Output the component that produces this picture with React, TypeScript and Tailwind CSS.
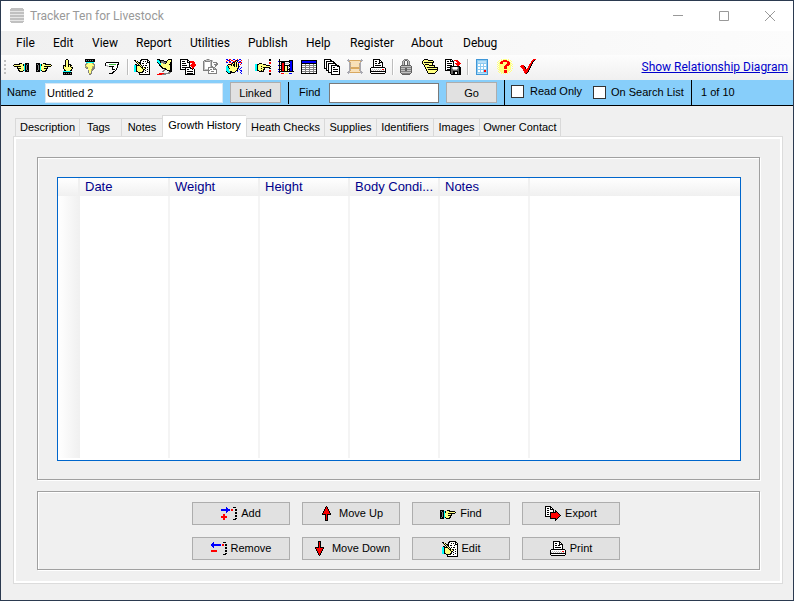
import React from "react";

const palette: Record<string, string> = {
  k: "#000000", y: "#ffff80", Y: "#b8b060", g: "#808080", s: "#c0c0c0", w: "#ffffff",
  r: "#ff0000", b: "#0000ff", c: "#00ffff", n: "#0000a0", o: "#d8a860", p: "#f8e0b8",
  G: "#40c040", u: "#3f97d8", v: "#b8e0f8", d: "#606060", l: "#ffff80", e: "#e6e6e6",
  t: "#8ccaf0", m: "#a8a8b0",
};

const handRight = [
  "kkkk...kkk......",
  "kgkkckyyykkkkkk.",
  "kkgkckyyyyyyyyyk",
  "kkgkcyyykkkkkkk.",
  "kkgkcyyyyyyk....",
  "kkgkcyyykkkk....",
  "kkgkcyyyyyk.....",
  "kgkkckyyykk.....",
  "kkkk..kkkk......",
];

const icons: Record<string, string[]> = {
  handRight: ["", "", "", "", ...handRight],
  handLeft: ["", "", "", "", ...handRight.map((r) => r.split("").reverse().join(""))],
  handUp: [
    ".......kk.......",
    "......kyyk......",
    "......kyyk......",
    "......kyyk......",
    "......kyyk......",
    "......kyykkk....",
    "....kkkyykykk...",
    "....kykyykyky...",
    "....kyyyyyyykk..",
    "....kyyyyyyyyk..",
    ".....kyyyyyyk...",
    ".....kkyyyykk...",
    "....cccccccc....",
    "....kkkkkkkkk...",
    "....kgkgkgkgk...",
    "....kkkkkkkkk...",
  ],
  handDown: [
    "...kkkkkkkkkk...",
    "...kgkgkgkgkk...",
    "...kkkkkkkkkk...",
    "....cccccccc....",
    "....gYyyyyYg....",
    "...gYyyyyyyYg...",
    "...gyyyyyyyyg...",
    "...YYyyyyyYYg...",
    "...gYgyyyyYgg...",
    "....ggyyyyggg...",
    "......yyyYgg....",
    "......gyyYg.....",
    "......gyyg......",
    "......gyyg......",
    ".......YYg......",
    ".......gg.......",
  ],
  sign: [
    "", "", "",
    ".kkkkkkkkkkkkk..",
    "kwwwwwwwwwwwwk..",
    "kwwwGGGGGGGwkk..",
    "ksswwwwwwwwwk...",
    "..sskkkkkwwwk...",
    ".......kwwwwk...",
    ".......kwwwk....",
    ".......kkkwk....",
    ".........wk.....",
    "........kk......",
    ".......kk.......",
    "....kkkk........",
  ],
  edit: [
    ".......kkkkkkk..",
    "kk....kkwwwwwkk.",
    ".kyk..kwwkwkwkwk",
    "..kykkkwwwwwwkkk",
    "...kykkwkkwwkwwk",
    ".kk.kykwwwwwwwwk",
    "cckkkkykwkwkkwwk",
    "cckyyykykwwwwwwk",
    "cckyyyykkykkwkwk",
    "cckyyyyykyykwwwk",
    "cckyyyyyykkwwkwk",
    "cckyyyyyykwkwwwk",
    "cckkyyyykkwwwkwk",
    "....kkkkkwwkwwwk",
    ".....kwwwwwwwwwk",
    ".....kkkkkkkkkkk",
  ],
  erase: [
    "kkk........kkkk.",
    "cckkkkk...kyyyk.",
    "ccckgggkkkyyyyk.",
    "kcckgggggkyyykk.",
    ".kccyyggkyyyykk.",
    "..kcyyyyyyyykkk.",
    "..kkyyyyyyyyykk.",
    "...kkyyyyyyyykk.",
    "....kkyyyyyyykk.",
    ".....kkkkyyyykk.",
    ".......gkkyyykk.",
    "......gg..kkkkk.",
    ".....gg.....kkk.",
    "...........ggg..",
    "..rrrrrgggggg...",
    "rrrrrgggg.......",
  ],
  copyDown: [
    "kkkkkkkk........",
    "kwwwwwwkk.......",
    "kwkkkwwkwkrrrr..",
    "kwwwwwwkkkrrrrr.",
    "kwkkkkwwwk..rrr.",
    "kwwwwwwwwk.rrrrr",
    "kwkkkkkwwkrrrrrr",
    "kwwwwwwwwk.rrrr.",
    "kwkkkkkkkkk.rr..",
    "kwwwwkwwwwkkrk..",
    "kkkkkkwkkwwwkwk.",
    ".....kwwwwwwwwk.",
    ".....kwkkkkkkwk.",
    ".....kwwwwwwwwk.",
    ".....kwkkkkkkwk.",
    ".....kkkkkkkkkk.",
  ],
  paste: [
    "...sggs.........",
    ".ggssssggs......",
    "gsgggggsgs......",
    "gswwwwwsg.gggg..",
    "gswwwwwsg....gg.",
    "gswwwwwsg..gggg.",
    "gswwwwwsg...gg..",
    "gswwwwwsgg..g...",
    "gswwwggggggg....",
    "gswwwgwwwwgsg...",
    "gssssgwggwgggg..",
    "gggggggwwwwwwg..",
    ".....gwwgggwwg..",
    ".....gwwwwwwwg..",
    ".....ggggggggg..",
  ],
  handColor: [
    "bb.rr..bb..r.bb.",
    ".rbb.rr..rkbb..r",
    "r..rb..rrkyk.rb.",
    "bb.rr.bkkyk.bbrr",
    ".....rkykyk.r..b",
    "..kkkkykkykyk.r.",
    ".kyyykykkykyk...",
    "cckyyyyykykykb..",
    "cckyyyyyyyyyk..b",
    "ccckyyyyyyykb.b.",
    "cccyyyyyyyyk.b..",
    "cccyyyyyyykk..bb",
    "kccckkyyyk.b...b",
    ".kcckkkkk.....b.",
    "..kkk..........b",
  ],
  handRed: [
    "..............kk",
    "..............kk",
    "................",
    "..............rr",
    "....kkk.......rr",
    "cckkyyyykkk.....",
    "cckyyyyyyyykkkk.",
    "cckyyykyyyyyyyyk",
    "cckyyyyykkkkkkk.",
    "cckyyykyyk....kk",
    "cckyyyyykk......",
    "cckkyykyk.....rr",
    "....kkkkk.....rr",
    "................",
    "..............kk",
    "..............kk",
  ],
  chart: [
    ".k..............",
    ".k.........kkkk.",
    "bkkkkkkkkkkkbbk.",
    ".k.kkkk....kbbk.",
    ".kskrrkssssKbbk.",
    ".k.krrk....kbbk.",
    "bkkkrrkkkkkkbbk.",
    ".k.krrkyyk.kbbk.",
    ".kskrrkyyksKbbk.",
    ".k.krrkyyk.kbbk.",
    "bkkkrrkyykkkbbk.",
    ".k.krrkyyk.kbbk.",
    "bkkkkkkkkkkkkkkk",
    ".k..............",
    "...rrr.yyy.bbb..",
  ],
  grid: [
    "",
    "kkkkkkkkkkkkkkkk",
    "kbbbbbbbbbbbbbbk",
    "kbbbbbbbbbbbbbbk",
    "kkkkkkkkkkkkkkkk",
    "kwwwgwwwgwwwgwwk",
    "kgggggggggggggGk",
    "kwwwgwwwgwwwgwwk",
    "kggggggggggggggk",
    "kwwwgwwwgwwwgwwk",
    "kggggggggggggggk",
    "kwwwgwwwgwwwgwwk",
    "kggggggggggggggk",
    "kwwwgwwwgwwwgwwk",
    "kkkkkkkkkkkkkkkk",
  ],
  pages: [
    "kkkkkkk.........",
    "kwwwwwkk........",
    "kwkkkkkkkk......",
    "kwkwwwwwwkk.....",
    "kwkwkkkkkkkk....",
    "kwkwkwwwwwwkk...",
    "kwkwkwwkkkkkkkk.",
    "kwkwkwwkwwwwwkkk",
    "kwkwkwwkwkkwwwwk",
    "kkkwkwwkwwwwwwwk",
    "..kwkwwkwkkkkkwk",
    "..kkkwwkwwwwwwwk",
    "....kwwkwkkkkkwk",
    "....kkkkwwwwwwwk",
    ".......kwwwwwwwk",
    ".......kkkkkkkkk",
  ],
  film: [
    ".m............m.",
    "mmmoooooooooommm",
    ".moppppppppppom.",
    "..mopppppppppm..",
    "..mmppppppppmm..",
    "..moppppppppom..",
    "..mmppppppppmm..",
    "..moppppppppom..",
    "..mmoooooooomm..",
    "..moooooooooom..",
    "..mmppppppppmm..",
    "..moppppppppom..",
    ".mmppppppppppmm.",
    "mmmoooooooooommm",
    ".m............m.",
  ],
  print: [
    "...kkkkkkk......",
    "...kwwwwwkk.....",
    "...kwkkwwkwk....",
    "...kwwwwwkkkk...",
    "...kwkkwkkwwk...",
    "...kwwwwwwwwk...",
    "...kwkkkkkkwk...",
    "...kwwwwwwwwk...",
    ".kkkkkkkkkkkkkk.",
    "kwwwwwwwwwwwwwwk",
    "kwswswswswswrrwk",
    "kswswswswswswswk",
    "kkkkkkkkkkkkkkkk",
    "kwwwwwwwwwwwwwwk",
    ".kkkkkkkkkkkkkk.",
  ],
  lock: [
    ".....gggg.......",
    "....gsddsg......",
    "...gsd..dsg.....",
    "...gsd..dsg.....",
    "...gsd..dsg.....",
    "...gsd..dsg.....",
    "..dddddddddd....",
    ".dssssssssssd...",
    ".dggggggggggd...",
    ".dssssddssssd...",
    ".dggggddggggd...",
    ".dssssddssssd...",
    ".dggggggggggd...",
    ".dssssssssssd...",
    "..dggggggggd....",
    "...dddddddd.....",
  ],
  folders: [
    "..kkkk..........",
    ".kyyyykkkkk.....",
    "kyyyyyyyyyyk....",
    "kykkkkkkkkkk....",
    "kyyyyyyyyyk.....",
    ".kykkkkyyyk.....",
    "..kyyyykkkkkk...",
    "..kyyyyyyyyyk...",
    "...kykkkkkkkkkkk",
    "...kyyyyyyyyyyyk",
    "....kykkkkkkkkkk",
    "....kyyyyyyyyyyk",
    ".....kyyyyyyyyk.",
    ".....kyyyyyyyk..",
    "......kkkkkkk...",
  ],
  save: [
    "kkkkkkk.........",
    "kwwwwkwk.rrrr...",
    "kwkkwkkkk..rrr..",
    "kwwwwwwwk...rrr.",
    "kwkkkkkwk.rrrrrr",
    "kwwwwwwwk..rrrr.",
    "kwkkkkkwk...rr..",
    "kwwwwkkkkkkkkkk.",
    "kwkkkkdswwwwsdkk",
    "kwwwwkdswwwwsdkk",
    "kwkkkkddssssddkk",
    "kkkkkkddddddddkk",
    ".....kddkkkkkdkk",
    ".....kddkkwwkdkk",
    ".....kddkkwwkdkk",
    "......kkkkkkkkkk",
  ],
  calc: [
    "..uuuuuuuuuuuu..",
    "..uttttttttttu..",
    "..utvvvvvvvvtu..",
    "..utvvvvvvvvtu..",
    "..uttttttttttu..",
    "..utwwtwwtwwtu..",
    "..utwwtwwtwwtu..",
    "..uttttttttttu..",
    "..utwwtwwtwwtu..",
    "..utwwtwwtwwtu..",
    "..uttttttttttu..",
    "..utwwtwwtrrtu..",
    "..utwwtwwtrrtu..",
    "..uttttttttttu..",
    "..uvvvvvvvvvvu..",
    "..uuuuuuuuuuuu..",
  ],
  help: [
    "....l.llll.l....",
    "..l.llrrrrll.l..",
    ".l.lrrrrrrrrl.l.",
    "l.lrrrllllrrrl..",
    ".llrrrllllrrrll.",
    "l.lllllllrrrrl.l",
    ".lllllllrrrrlll.",
    "l.lllllrrrllll.l",
    ".llllllrrrllll..",
    "l.lllllrrrllll.l",
    ".lllllllllllll..",
    "..lllllrrrlll.l.",
    ".l.llllrrrll.l..",
    "..l.lllrrrl.l...",
    "....l.l.l.l.....",
  ],
  check: [
    ".............rrr",
    "............rrk.",
    "...........rrk..",
    "...........rk...",
    "..........rrk...",
    ".........rrk....",
    ".rrr.....rrk....",
    "rrrrk...rrk.....",
    ".rrrrk..rrk.....",
    "..rrrk.rrk......",
    "...rrrrrrk......",
    "...rrrrrk.......",
    "....rrrrk.......",
    "....rrrk........",
    ".....rk.........",
  ],
  add: [
    "",
    ".....b......kkk.",
    ".....bb.........",
    "bbbbbbbbb.rr..kk",
    "bbbbbbbbb.rr..kk",
    ".....bb.........",
    ".....b........kk",
    "..............kk",
    "..rr............",
    "..rr..........kk",
    "rrrrrr........kk",
    "rrrrrr..........",
    "..rr..........kk",
    "..rr........kkk.",
  ],
  remove: [
    "",
    "..b.........kkk.",
    ".bb.............",
    "bbbbbbbbbb.rr.kk",
    "bbbbbbbbbb.rr.kk",
    ".bb.............",
    "..b...........kk",
    "..............kk",
    "................",
    "rrrrrr........kk",
    "rrrrrr........kk",
    "................",
    "..............kk",
    "............kkk.",
  ],
  up: [
    ".......k........",
    "......krk.......",
    "......krk.......",
    ".....krrrk......",
    ".....krrrk......",
    "....krrrrrk.....",
    "....krrrrrk.....",
    "...krrrrrrrk....",
    "...kkkkrkkkk....",
    "......krk.......",
    "......krk.......",
    "......krk.......",
    "......krk.......",
    "......krk.......",
    "......kkk.......",
  ],
  exportDoc: [
    "kkkkkk..........",
    "kwwwwkk.........",
    "kwkkwkwk........",
    "kwwwwkkkk.......",
    "kwkkwwwwk.k.....",
    "kwwwwwwwk.kk....",
    "kwkkwkkkkkkrk...",
    "kwwwwkrrrrrrrk..",
    "kwkkwkrrrrrrrrk.",
    "kwwwwkrrrrrrrrrk",
    "kkkkkkrrrrrrrrk.",
    ".....krrrrrrrk..",
    ".....kkkkkkrk...",
    "..........kk....",
    "..........k.....",
  ],
  app: [
    ".ssssssssssss...",
    "ssssssssssssss..",
    "ssssssssssssss..",
    "eeeeeeeeeeeeee..",
    "ssssssssssssss..",
    "ssssssssssssss..",
    "eeeeeeeeeeeeee..",
    "ssssssssssssss..",
    "ssssssssssssss..",
    "eeeeeeeeeeeeee..",
    "ssssssssssssss..",
    "ssssssssssssss..",
    "eeeeeeeeeeeeee..",
    "ssssssssssssss..",
    ".ssssssssssss...",
  ],
};
icons.down = [...icons.up].reverse();

function PixelIcon({ name }: { name: string }) {
  return (
    <svg className="size-4 shrink-0" viewBox="0 0 16 16" shapeRendering="crispEdges" aria-hidden="true">
      {icons[name].flatMap((row, y) =>
        row.split("").map((ch, x) =>
          palette[ch] ? <rect key={`${x}-${y}`} x={x} y={y} width="1" height="1" fill={palette[ch]} /> : null
        )
      )}
    </svg>
  );
}

const menus = [
  ["File", "w-[37px]"], ["Edit", "w-[39px]"], ["View", "w-11"], ["Report", "w-[54px]"],
  ["Utilities", "w-[58px]"], ["Publish", "w-[58px]"], ["Help", "w-11"], ["Register", "w-[61px]"],
  ["About", "w-[52px]"], ["Debug", "w-[54px]"],
];

const toolGroups = [
  ["handLeft", "handRight", "handUp", "handDown", "sign"],
  ["edit", "erase", "copyDown", "paste", "handColor"],
  ["handRed", "chart", "grid", "pages", "film", "print"],
  ["lock", "folders", "save"],
  ["calc", "help", "check"],
];
const toolLabels: Record<string, string> = {
  handLeft: "Previous", handRight: "Next", handUp: "First", handDown: "Last", sign: "Go to",
  edit: "Edit", erase: "Clear", copyDown: "Copy", paste: "Paste", handColor: "Select",
  handRed: "Find", chart: "Chart", grid: "Table", pages: "Pages", film: "Images", print: "Print",
  lock: "Lock", folders: "Open", save: "Save", calc: "Calculator", help: "Help", check: "Check",
};

const tabs = [
  ["Description", "w-16"], ["Tags", "w-[42px] pr-1"], ["Notes", "w-[41px]"], ["Growth History", "w-[84px]"],
  ["Heath Checks", "w-[78px]"], ["Supplies", "w-[52px]"], ["Identifiers", "w-[57px]"],
  ["Images", "w-[46px]"], ["Owner Contact", "w-[82px]"],
];

const actions = [
  ["Add", "add"], ["Move Up", "up"], ["Find", "handRight"], ["Export", "exportDoc"],
  ["Remove", "remove"], ["Move Down", "down"], ["Edit", "edit"], ["Print", "print"],
];

const columns = ["Date", "Weight", "Height", "Body Condi...", "Notes"];

function Etched({ className, children }: { className: string; children: React.ReactNode }) {
  return (
    <div className={`border border-[#a0a0a0] shadow-[inset_1px_1px_0_#fff,1px_1px_0_#fff] ${className}`}>{children}</div>
  );
}

export default function App() {
  return (
    <div className="flex min-h-screen flex-col border border-[#2b3a50] bg-[#f0f0f0] font-['Liberation_Sans',Arial,sans-serif] text-[11px] leading-[13px] text-black">
      <header className="flex h-[30px] items-center bg-white pl-[9px] font-[Roboto,sans-serif] text-xs text-[#999]">
        <PixelIcon name="app" />
        <h1 className="ml-1 flex-1">Tracker Ten for Livestock</h1>
        <button aria-label="Minimize" className="flex h-full w-[46px] items-center justify-center">
          <svg className="size-[11px]" viewBox="0 0 11 11" stroke="#999" fill="none"><path d="M0 4.5h10" /></svg>
        </button>
        <button aria-label="Maximize" className="flex h-full w-[46px] items-center justify-center">
          <svg className="size-[11px]" viewBox="0 0 11 11" stroke="#999" fill="none"><path d="M.5.5h9v9h-9z" /></svg>
        </button>
        <button aria-label="Close" className="flex h-full w-[46px] items-center justify-center">
          <svg className="size-[11px]" viewBox="0 0 11 11" stroke="#999" fill="none"><path d="M0 0l10 10M10 0l-10 10" /></svg>
        </button>
      </header>

      <nav className="flex h-6 items-center bg-linear-to-r from-[#f0f0f0] to-[#fcfcfc] pl-[7px] font-[Roboto,sans-serif] text-xs">
        {menus.map(([label, width]) => (
          <button key={label} className={`h-full pl-2 text-left whitespace-nowrap ${width}`}>{label}</button>
        ))}
      </nav>

      <div className="flex h-[25px] items-center bg-linear-to-b from-[#fdfdfd] to-[#f0f0f0] pr-[5px] pb-[2px] pl-[3px]">
        <div className="flex w-[5px] flex-col gap-[2px]">
          {[0, 1, 2, 3].map((i) => <span key={i} className="size-[2px] bg-[#c0c0c0]" />)}
        </div>
        {toolGroups.map((group, index) => (
          <div key={index} className="flex items-center">
            {index > 0 && <span className="mr-px ml-[3px] h-4 w-[2px] border-l border-[#bdbdbd] bg-white" />}
            {group.map((icon) => (
              <button key={icon} aria-label={toolLabels[icon]} className="flex h-[22px] w-[23px] items-center pl-1">
                <PixelIcon name={icon} />
              </button>
            ))}
          </div>
        ))}
        <a href="#diagram" className="ml-auto font-[Roboto,sans-serif] text-xs whitespace-nowrap text-[#0000cc] underline">
          Show Relationship Diagram
        </a>
      </div>

      <div className="flex h-[26px] items-center border-b border-black bg-[#87cefa] pl-[6px]">
        <label htmlFor="name" className="w-[38px]">Name</label>
        <input id="name" defaultValue="Untitled 2" className="h-5 w-[178px] border border-[#d8e8f4] bg-white px-px outline-none" />
        <button className="ml-[7px] h-[21px] w-[51px] border border-[#adadad] bg-[#e1e1e1] pt-px">Linked</button>
        <span className="ml-[7px] h-[22px] w-px bg-black" />
        <label htmlFor="find" className="ml-[10px] w-[30px]">Find</label>
        <input id="find" className="h-5 w-[110px] border border-[#7a7a7a] bg-white px-1 outline-none" />
        <button className="ml-[7px] h-[21px] w-[51px] border border-[#adadad] bg-[#e1e1e1] pt-px">Go</button>
        <span className="ml-[7px] h-full w-px bg-black" />
        <label className="ml-[6px] flex w-[82px] items-center gap-[6px] pb-[2px] whitespace-nowrap">
          <input type="checkbox" className="size-[13px] shrink-0 appearance-none border border-[#333] bg-white" />
          Read Only
        </label>
        <label className="flex w-[98px] items-center gap-[5px] whitespace-nowrap">
          <input type="checkbox" className="size-[13px] shrink-0 appearance-none border border-[#333] bg-white" />
          On Search List
        </label>
        <span className="h-full w-px bg-black" />
        <span className="ml-[9px]">1 of 10</span>
      </div>

      <main className="flex flex-1 flex-col pt-[9px] pr-[10px] pb-4 pl-3">
        <div role="tablist" className="flex items-end pl-[2px]">
          {tabs.map(([label, width]) => {
            const selected = label === "Growth History";
            return (
              <button
                key={label}
                role="tab"
                aria-selected={selected}
                className={`whitespace-nowrap border-t border-l border-[#d9d9d9] text-center last:border-r ${width} ${
                  selected ? "z-10 -mb-px h-[22px] bg-white pb-[2px]" : "h-[18px] bg-[#f0f0f0]"
                }`}
              >
                {label}
              </button>
            );
          })}
        </div>
        <section className="flex flex-1 flex-col border border-[#dcdcdc] bg-white p-[2px]">
          <div className="flex flex-1 flex-col gap-[11px] bg-[#f0f0f0] pt-[18px] pr-5 pb-[11px] pl-[21px]">
            <Etched className="flex flex-1 flex-col pt-[19px] pr-[18px] pb-[18px] pl-[19px]">
              <div className="flex flex-1 border border-[#0066cc] bg-white pb-[2px]">
                <table className="w-full table-fixed border-separate border-spacing-0 text-[13px] leading-4 text-[#00008b]">
                  <colgroup>
                    <col className="w-[22px]" />
                    {columns.map((c) => <col key={c} className="w-[90px]" />)}
                    <col />
                  </colgroup>
                  <thead className="bg-linear-to-b from-white to-[#f0f0f0]">
                    <tr className="h-[18px]">
                      <th className="border-r-2 border-[#f0f0f0] p-0" />
                      {columns.map((c) => (
                        <th key={c} scope="col" className="border-r-2 border-[#f0f0f0] py-0 pr-0 pl-[5px] text-left font-normal whitespace-nowrap">{c}</th>
                      ))}
                      <th className="p-0" />
                    </tr>
                  </thead>
                  <tbody>
                    <tr>
                      <td className="bg-linear-to-r from-white to-[#f0f0f0] p-0" />
                      {columns.map((c) => <td key={c} className="border-r-2 border-[#f4f4f4] p-0" />)}
                      <td className="p-0" />
                    </tr>
                  </tbody>
                </table>
              </div>
            </Etched>
            <Etched className="grid grid-cols-[repeat(4,98px)] justify-center gap-3 pt-[10px] pb-[9px] pl-[15px]">
              {actions.map(([label, icon]) => (
                <button key={label} className="flex h-[23px] items-center justify-center gap-1 border border-[#adadad] bg-[#e1e1e1] whitespace-nowrap">
                  <PixelIcon name={icon} />
                  {label}
                </button>
              ))}
            </Etched>
          </div>
        </section>
      </main>
    </div>
  );
}
